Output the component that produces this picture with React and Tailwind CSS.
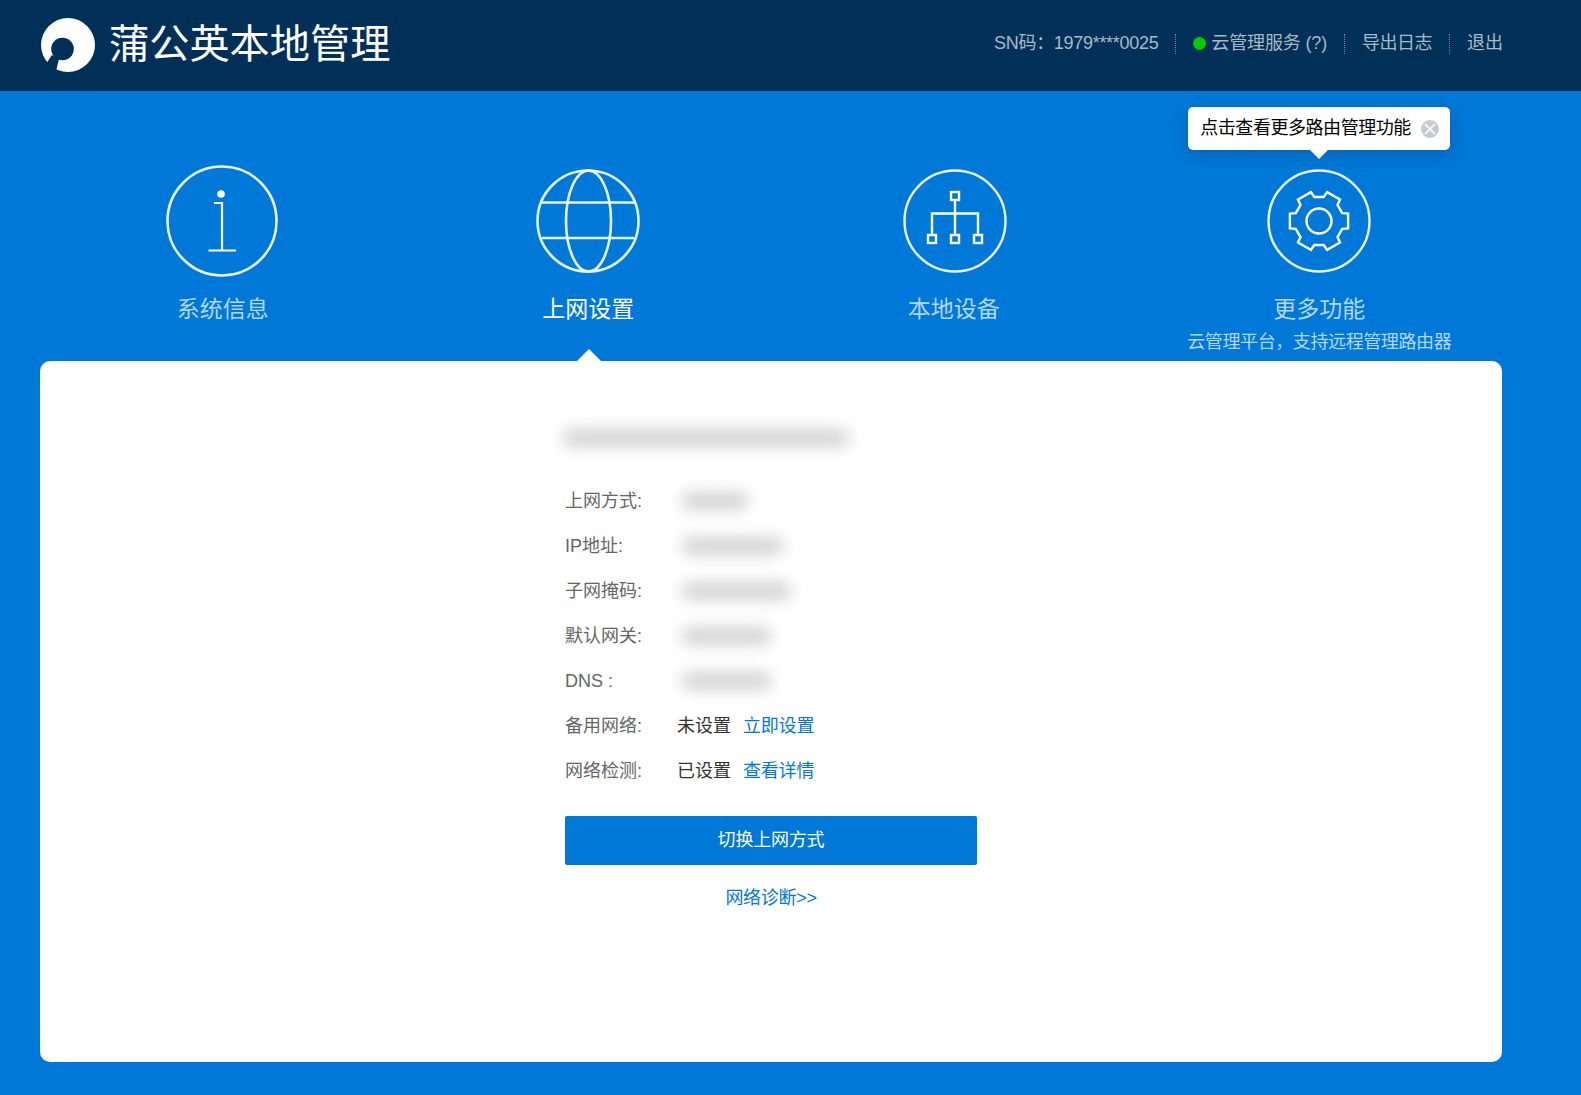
import { useState } from "react";

const FONT = "font-['Liberation_Sans','Noto_Sans_CJK_SC',sans-serif]";

function Logo() {
  return (
    <svg width="56" height="56" viewBox="0 0 56 56" className="mb-[2px] shrink-0">
      <circle cx="28" cy="28" r="27" fill="#fff" />
      <circle cx="22.5" cy="32" r="11.3" fill="#003057" />
      <path d="M12 38 L19 42 L15.5 56 L4 50 Z" fill="#003057" />
    </svg>
  );
}

function InfoIcon() {
  return (
    <svg width="112" height="112" viewBox="0 0 112 112" fill="none" stroke="#fff" strokeWidth="2.6" className="mr-[2px]">
      <circle cx="56" cy="56" r="54.5" strokeOpacity="0.92" />
      <circle cx="55" cy="29" r="3.8" fill="#fff" stroke="none" />
      <path d="M48 38 H56 V85 M42.5 85.5 H70" strokeWidth="2.2" />
    </svg>
  );
}

function GlobeIcon() {
  return (
    <svg width="104" height="104" viewBox="0 0 104 104" fill="none" stroke="#fff" strokeWidth="2.6" strokeOpacity="0.9">
      <circle cx="52" cy="52" r="50.5" />
      <ellipse cx="52.5" cy="52" rx="22.5" ry="50.5" />
      <path d="M6 33.5 H98 M6 69 H98" />
    </svg>
  );
}

function NetworkIcon() {
  return (
    <svg width="104" height="104" viewBox="0 0 104 104" fill="none" stroke="#fff" strokeWidth="2.4" className="ml-[2px]">
      <circle cx="52" cy="52" r="50.5" strokeOpacity="0.92" />
      <rect x="48" y="23" width="8" height="8" />
      <rect x="25" y="66" width="8" height="8" />
      <rect x="48" y="66" width="8" height="8" />
      <rect x="71" y="66" width="8" height="8" />
      <path d="M52 31 V66 M29 66 V44.5 H75 V66" />
    </svg>
  );
}

// gear outline: six wide teeth
function gearPath() {
  const cx = 52;
  const cy = 52;
  const pts = [];
  for (let k = 0; k < 6; k++) {
    const a = (k * Math.PI) / 3;
    const w = 0.25;
    const b = 0.33;
    pts.push([cx + 24.5 * Math.cos(a - b), cy + 24.5 * Math.sin(a - b)]);
    pts.push([cx + 30 * Math.cos(a - w), cy + 30 * Math.sin(a - w)]);
    pts.push([cx + 30 * Math.cos(a + w), cy + 30 * Math.sin(a + w)]);
    pts.push([cx + 24.5 * Math.cos(a + b), cy + 24.5 * Math.sin(a + b)]);
  }
  return "M" + pts.map((p) => p[0].toFixed(1) + " " + p[1].toFixed(1)).join(" L") + " Z";
}

function GearIcon() {
  return (
    <svg width="104" height="104" viewBox="0 0 104 104" fill="none" stroke="#fff" strokeWidth="2.4">
      <circle cx="52" cy="52" r="50.5" strokeOpacity="0.92" />
      <path d={gearPath()} strokeLinejoin="miter" />
      <circle cx="52" cy="52" r="12.5" />
    </svg>
  );
}

function NavItem({ icon, label, sub, active, tip }) {
  return (
    <div className="relative flex h-[270px] flex-col items-center pt-[74px]">
      <div className="flex h-[112px] w-full items-center justify-center">{icon}</div>
      <div className={`mt-[17px] h-[30px] text-[23px] leading-[30px] ${active ? "text-white" : "text-[#b3d7f3]"}`}>
        {label}
      </div>
      {sub && <div className="mt-[6px] text-[18px] leading-[24px] tracking-[-0.4px] whitespace-nowrap text-[#b3d7f3]">{sub}</div>}
      {active && (
        <div className="absolute bottom-0 left-1/2 ml-[-11px] h-0 w-0 border-x-[12px] border-b-[12px] border-x-transparent border-b-white" />
      )}
      {tip}
    </div>
  );
}

function Tooltip() {
  const [open, setOpen] = useState(true);
  if (!open) return null;
  return (
    <div className="absolute top-[16px] left-1/2 ml-[-131px] flex h-[43px] w-[262px] items-center justify-between rounded-[5px] bg-white pr-[11px] pl-[12px] text-[18px] tracking-[-0.45px] whitespace-nowrap text-black shadow-[0_4px_16px_rgba(0,0,0,0.18)]">
      <span>点击查看更多路由管理功能</span>
      <button type="button" onClick={() => setOpen(false)} className="flex h-[18px] w-[18px] items-center justify-center rounded-full bg-[#c6cbd4]">
        <svg width="12" height="12" viewBox="0 0 12 12" stroke="#fff" strokeWidth="1.5">
          <path d="M1 1 L11 11 M11 1 L1 11" />
        </svg>
      </button>
      <div className="absolute top-full left-1/2 ml-[-9px] h-0 w-0 border-x-[9px] border-t-[9px] border-x-transparent border-t-white" />
    </div>
  );
}

function Blur({ className }) {
  return <div className={`mb-[2px] h-[18px] rounded-full bg-[#d2d2d2] blur-[8px] ${className}`} />;
}

function Row({ label, children }) {
  return (
    <div className="flex h-[45px] items-center pt-[2px] text-[18px]">
      <div className="w-[112px] shrink-0 text-[#666]">{label}</div>
      {children}
    </div>
  );
}

function Sep() {
  return <div className="mx-[17px] h-[20px] border-l border-dotted border-[#6f8aa3]" />;
}

export default function App() {
  return (
    <div className={`min-h-[1095px] bg-[#0078d7] ${FONT}`}>
      <header className="flex h-[91px] items-center justify-between bg-[#003057] pr-[78px] pl-[40px]">
        <div className="flex items-center">
          <Logo />
          <h1 className="ml-[13px] pb-[2px] text-[40.2px] leading-[48px] font-normal whitespace-nowrap text-white">蒲公英本地管理</h1>
        </div>
        <div className="flex items-center pb-[4px] text-[18px] whitespace-nowrap text-[#a9b8c6]">
          <span className="tracking-[-0.3px]">SN码：1979****0025</span>
          <Sep />
          <span className="mr-[5px] h-[13px] w-[13px] rounded-full bg-[#00cc00]" />
          <span className="tracking-[-0.15px]">云管理服务 (?)</span>
          <Sep />
          <span className="tracking-[-0.5px]">导出日志</span>
          <Sep />
          <span>退出</span>
        </div>
      </header>

      <main className="mx-[40px] w-[1462px] pb-[33px]">
        <nav className="grid grid-cols-4">
          <NavItem icon={<InfoIcon />} label="系统信息" />
          <NavItem icon={<GlobeIcon />} label="上网设置" active />
          <NavItem icon={<NetworkIcon />} label="本地设备" />
          <NavItem icon={<GearIcon />} label="更多功能" sub="云管理平台，支持远程管理路由器" tip={<Tooltip />} />
        </nav>

        <section className="h-[701px] rounded-[10px] bg-white pt-[58px] pl-[525px]">
          <div className="w-[412px]">
            <div className="flex h-[40px] items-center">
              <Blur className="ml-[-3px] w-[288px]" />
            </div>
            <div className="mt-[19px]">
              <Row label="上网方式:"><Blur className="ml-[4px] w-[68px]" /></Row>
              <Row label="IP地址:"><Blur className="ml-[4px] w-[103px]" /></Row>
              <Row label="子网掩码:"><Blur className="ml-[4px] w-[111px]" /></Row>
              <Row label="默认网关:"><Blur className="ml-[4px] w-[91px]" /></Row>
              <Row label="DNS :"><Blur className="ml-[4px] w-[91px]" /></Row>
              <Row label="备用网络:">
                <span className="text-[#333]">未设置</span>
                <a href="#" className="ml-[12px] tracking-[-0.2px] text-[#0078d7]">立即设置</a>
              </Row>
              <Row label="网络检测:">
                <span className="text-[#333]">已设置</span>
                <a href="#" className="ml-[12px] tracking-[-0.2px] text-[#0078d7]">查看详情</a>
              </Row>
            </div>
            <button type="button" className="mt-[23px] h-[49px] w-full rounded-[2px] bg-[#0078d7] text-[18px] tracking-[-0.2px] text-white">
              切换上网方式
            </button>
            <a href="#" className="mt-[21px] block text-center text-[18px] leading-[24px] tracking-[-0.3px] text-[#0078d7]">网络诊断&gt;&gt;</a>
          </div>
        </section>
      </main>
    </div>
  );
}
